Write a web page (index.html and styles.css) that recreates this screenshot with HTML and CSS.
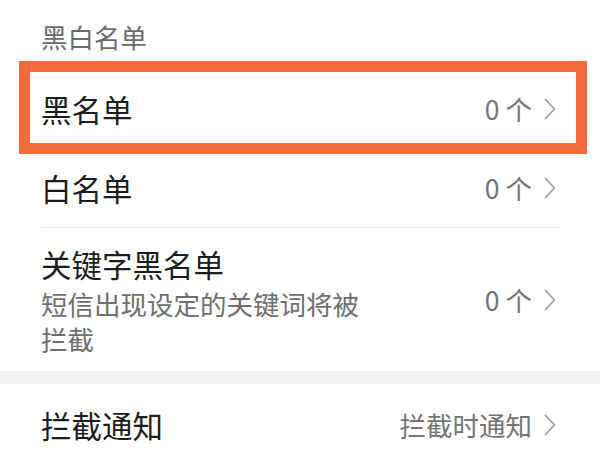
FILE: index.html
```html
<!DOCTYPE html>
<html lang="zh-CN">
<head>
<meta charset="utf-8">
<title>黑白名单</title>
<link rel="stylesheet" href="styles.css">
</head>
<body>
<div class="page">
  <div class="section-title">黑白名单</div>
  <div class="list">
    <div class="row">
      <div class="label">黑名单</div>
      <div class="value">0 个<svg class="chev" viewBox="0 0 12 22" width="12" height="22"><polyline points="1.5,1.5 10.5,11 1.5,20.5"/></svg></div>
    </div>
    <div class="row">
      <div class="label">白名单</div>
      <div class="value">0 个<svg class="chev" viewBox="0 0 12 22" width="12" height="22"><polyline points="1.5,1.5 10.5,11 1.5,20.5"/></svg></div>
    </div>
    <div class="row row-tall">
      <div class="text">
        <div class="label">关键字黑名单</div>
        <div class="sub">短信出现设定的关键词将被拦截</div>
      </div>
      <div class="value">0 个<svg class="chev" viewBox="0 0 12 22" width="12" height="22"><polyline points="1.5,1.5 10.5,11 1.5,20.5"/></svg></div>
    </div>
  </div>
  <div class="band"></div>
  <div class="list">
    <div class="row row-last">
      <div class="label">拦截通知</div>
      <div class="value">拦截时通知<svg class="chev" viewBox="0 0 12 22" width="12" height="22"><polyline points="1.5,1.5 10.5,11 1.5,20.5"/></svg></div>
    </div>
  </div>
  <div class="highlight"></div>
</div>
</body>
</html>
```
FILE: styles.css
```css
html, body {
  margin: 0;
  padding: 0;
  background: #ffffff;
}
body {
  font-family: "Noto Sans CJK SC", "Noto Sans", sans-serif;
  width: 600px;
  height: 450px;
  overflow: hidden;
}
.page {
  position: relative;
  width: 600px;
  height: 450px;
}
.section-title {
  height: 70px;
  box-sizing: border-box;
  padding: 18px 0 0 41px;
  font-size: 26.5px;
  line-height: 38px;
  color: #6b6b6b;
}
.list {
  margin: 0 40px 0 41px;
}
.row {
  display: flex;
  align-items: center;
  justify-content: space-between;
  height: 79px;
  box-sizing: border-box;
  padding-right: 4px;
  border-bottom: 1px solid #e8e8e8;
}
.row-tall {
  height: 143px;
  border-bottom: none;
  padding-top: 1px;
}
.row-last {
  height: 86px;
  border-bottom: none;
  padding-bottom: 4px;
}
.label {
  font-size: 30.5px;
  line-height: 38px;
  color: #1c1c1c;
}
.sub {
  width: 330px;
  font-size: 26.5px;
  line-height: 35px;
  color: #6e6e6e;
  margin-top: 3px;
}
.value {
  display: flex;
  align-items: center;
  gap: 12px;
  font-size: 26.5px;
  line-height: 36px;
  color: #737373;
}
.chev {
  display: block;
  fill: none;
  stroke: #9e9e9e;
  stroke-width: 1.8;
  stroke-linecap: round;
  stroke-linejoin: round;
}
.band {
  height: 13px;
  background: #f2f2f2;
}
.highlight {
  position: absolute;
  left: 19px;
  top: 61px;
  width: 568px;
  height: 93px;
  box-sizing: border-box;
  border: 11px solid #f5693b;
}
```
